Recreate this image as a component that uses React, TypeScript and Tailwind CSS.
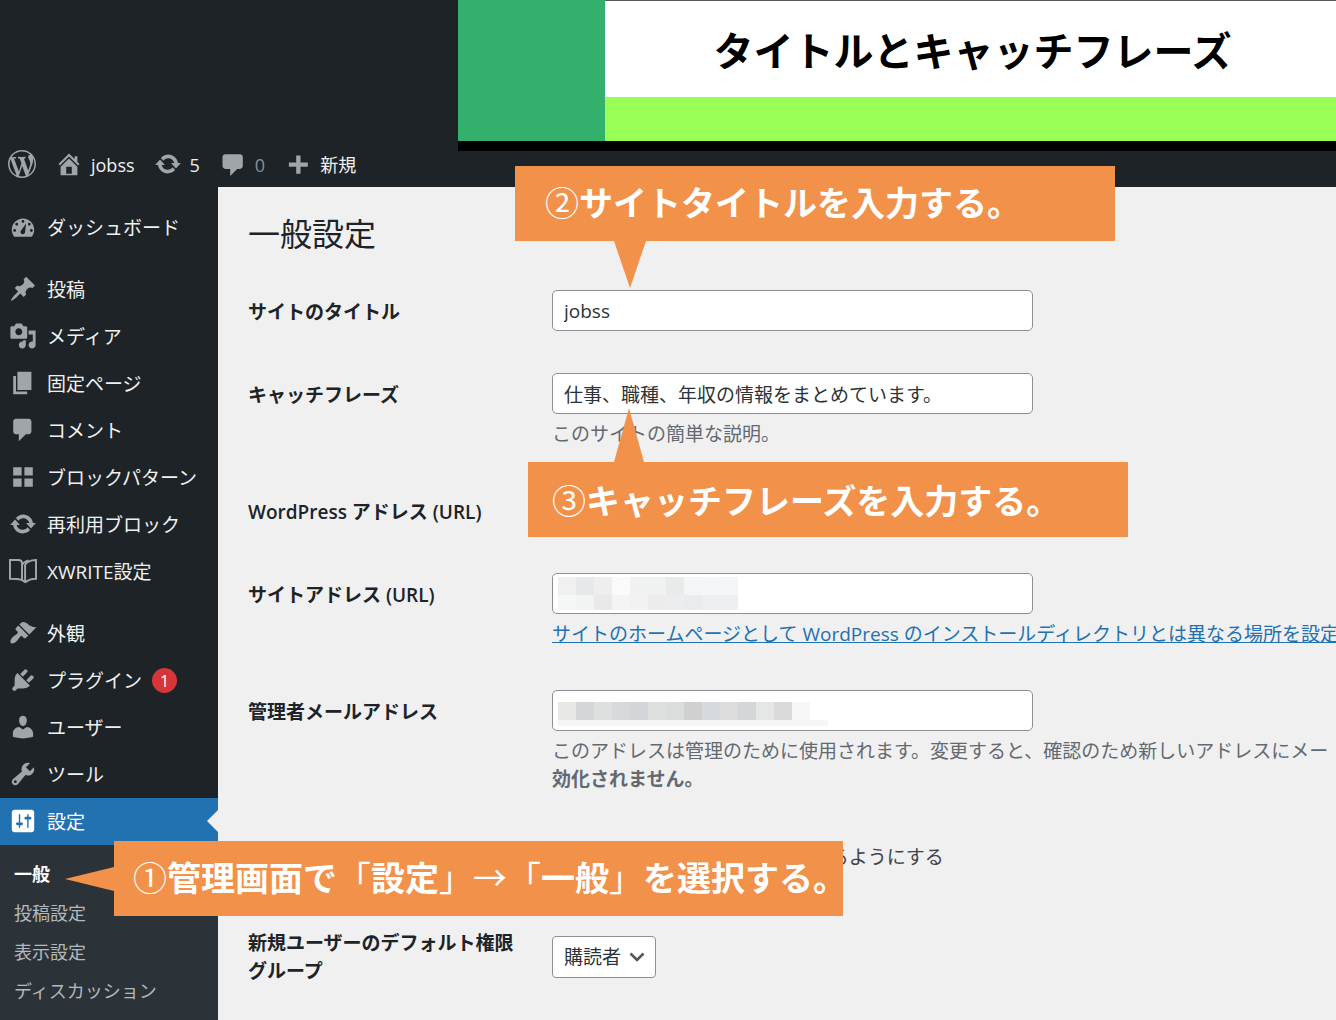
import type { ReactNode } from "react";

const ICONS = {
  wordpress:
    "M20 10c0-5.51-4.49-10-10-10C4.48 0 0 4.49 0 10c0 5.52 4.48 10 10 10 5.51 0 10-4.48 10-10zM7.78 15.37L4.37 6.22c.55-.02 1.17-.08 1.17-.08.5-.06.44-1.13-.06-1.11 0 0-1.45.11-2.37.11-.18 0-.37 0-.58-.01C4.12 2.69 6.87 1.11 10 1.11c2.33 0 4.45.87 6.05 2.34-.68-.11-1.65.39-1.65 1.58 0 .74.45 1.36.9 2.1.35.61.55 1.36.55 2.46 0 1.49-1.4 5-1.4 5l-3.03-8.37c.54-.02.82-.17.82-.17.5-.05.44-1.25-.06-1.22 0 0-1.44.12-2.38.12-.87 0-2.33-.12-2.33-.12-.5-.03-.56 1.2-.06 1.22l.92.08 1.26 3.41zM17.41 10c.24-.64.74-1.87.43-4.25.7 1.29 1.05 2.71 1.05 4.25 0 3.29-1.73 6.24-4.4 7.78.97-2.59 1.94-5.2 2.92-7.78zM6.1 18.09C3.12 16.65 1.11 13.53 1.11 10c0-1.3.23-2.48.72-3.59C3.25 10.3 4.67 14.2 6.1 18.09zm4.03-6.63l2.58 6.98c-.86.29-1.76.45-2.71.45-.79 0-1.57-.11-2.29-.33.81-2.38 1.62-4.74 2.42-7.1z",
  home: "M16 8.5l1.53 1.53-1.06 1.06L10 4.6l-6.47 6.49-1.06-1.06L10 2.5l4 4v-2h2v4zm-6-2.46l6 5.99V18H4v-5.97zM12 17v-5H8v5h4z",
  update:
    "M10.2 3.28c3.53 0 6.43 2.61 6.92 6h2.08l-3.5 4-3.5-4h2.32c-.45-1.97-2.21-3.45-4.32-3.45-1.45 0-2.73.71-3.54 1.78L4.95 5.66C6.23 4.2 8.11 3.28 10.2 3.28zm-.4 13.44c-3.52 0-6.43-2.61-6.92-6H.8l3.5-4c1.17 1.33 2.33 2.67 3.5 4H5.48c.45 1.97 2.21 3.45 4.32 3.45 1.45 0 2.73-.71 3.54-1.78l1.71 1.95c-1.28 1.46-3.15 2.38-5.25 2.38z",
  comments: "M5 2h9c1.1 0 2 .9 2 2v7c0 1.1-.9 2-2 2h-2l-5 5v-5H5c-1.1 0-2-.9-2-2V4c0-1.1.9-2 2-2z",
  bubble: "M4.500 3h10.500c1.1 0 2 .9 2 2v6.500c0 1.1-.9 2-2 2H13l-5 5v-5H4.500c-1.1 0-2-.9-2-2V5c0-1.1.9-2 2-2z",
  plus: "M17 9v3h-5.200v5H8.700v-5H3.500V9h5.200V4h3.100v5z",
  dashboard:
    "M3.76 17.01h12.48C17.34 15.63 18 13.9 18 12c0-4.41-3.58-8-8-8s-8 3.59-8 8c0 1.9.66 3.63 1.76 5.01zM9 6c0-.55.45-1 1-1s1 .45 1 1c0 .56-.45 1-1 1s-1-.44-1-1zM4.500 8c0-.55.45-1 1-1s1 .45 1 1c0 .56-.45 1-1 1s-1-.44-1-1zm4.100 4.500l3.600-5-.7 6.100c-.1.900-.700 1.600-1.600 1.600-1 0-1.700-.8-1.700-1.600 0-.4.100-.8.400-1.100zM13.500 8c0-.55.45-1 1-1s1 .45 1 1c0 .56-.45 1-1 1s-1-.44-1-1zM3 12.500c0-.55.45-1 1-1s1 .45 1 1c0 .56-.45 1-1 1s-1-.44-1-1zm12 0c0-.55.45-1 1-1s1 .45 1 1c0 .56-.45 1-1 1s-1-.44-1-1z",
  post: "M10.44 3.02l1.82-1.82 6.36 6.35-1.83 1.82c-1.05-.68-2.48-.57-3.41.36l-.75.75c-.92.93-1.04 2.35-.35 3.41l-1.83 1.82-2.41-2.41-2.8 2.79c-.42.42-3.38 2.71-3.8 2.29s1.86-3.39 2.28-3.81l2.79-2.79L4.1 9.36l1.83-1.82c1.05.69 2.48.57 3.4-.36l.75-.75c.93-.92 1.05-2.35.36-3.41z",
  media:
    "M13 11V4c0-.55-.45-1-1-1h-1.67L9 1H5L3.67 3H2c-.55 0-1 .45-1 1v7c0 .55.45 1 1 1h10c.55 0 1-.45 1-1zM7 4.5c1.38 0 2.5 1.12 2.5 2.5S8.38 9.5 7 9.5 4.5 8.38 4.5 7 5.62 4.5 7 4.5zM14 6h5v10.5c0 1.38-1.12 2.5-2.5 2.5S14 17.88 14 16.5s1.12-2.5 2.5-2.5c.17 0 .34.02.5.05V9h-3V6zm-4 8.05V13h2v3.5c0 1.38-1.12 2.5-2.5 2.5S7 17.88 7 16.5 8.12 14 9.5 14c.17 0 .34.02.5.05z",
  page: "M6 15V2h10v13H6zm-1 1h8v2H3V5h2v11z",
  grid: "M9 9V3H3v6h6zm8 0V3h-6v6h6zm-8 8v-6H3v6h6zm8 0v-6h-6v6h6z",
  book: "M11.500 18.200C10 16.200 8 15.600 .7 15.600V2.200H6.500C8 2.200 9.300 3 9.300 4.600V16.600M11.500 18.200V5.600C12 4 15 2.200 19.300 2.200V15.600C16 15.600 13.500 16.500 11.500 18.200M9.300 6C9.800 4.500 12 2.800 14 2.400",
  appearance:
    "M14.48 11.06L7.41 3.99l1.5-1.5c.5-.56 2.3-.47 3.51.32 1.21.8 1.43 1.28 2.91 2.1 1.18.64 2.45 1.26 4.45.85zm-.71.71L6.7 4.7 4.93 6.47c-.39.39-.39 1.02 0 1.41l1.06 1.06c.39.39.39 1.03 0 1.42-.6.6-1.43 1.11-2.21 1.69-.35.26-.7.53-1.01.84C1.43 14.23.4 16.08 1.4 17.07c.99 1 2.84-.03 4.18-1.36.31-.31.58-.66.85-1.02.57-.78 1.08-1.61 1.69-2.21.39-.39 1.02-.39 1.41 0l1.06 1.06c.39.39 1.02.39 1.41 0z",
  plugins:
    "M13.11 4.36L9.87 7.6 8 5.73l3.24-3.24c.35-.34 1.05-.2 1.56.32.52.51.66 1.21.31 1.55zm-8 1.77l.91-1.12 9.01 9.01-1.19.84c-.71.71-2.63 1.16-3.82 1.16H6.14L4.9 17.26c-.59.59-1.54.59-2.12 0-.59-.58-.59-1.53 0-2.12l1.24-1.24v-3.88c0-1.13.4-3.19 1.09-3.89zm7.26 3.97l3.24-3.24c.34-.35 1.04-.21 1.55.31.52.51.66 1.21.31 1.55l-3.24 3.25z",
  users:
    "M10 9.25c-2.27 0-2.73-3.44-2.73-3.44C7 4.02 7.82 2 9.97 2c2.16 0 2.98 2.02 2.71 3.81 0 0-.41 3.44-2.68 3.44zm0 2.57L12.72 10c2.39 0 4.52 2.33 4.52 4.53v2.49s-3.65 1.13-7.24 1.13c-3.65 0-7.24-1.13-7.24-1.13v-2.49c0-2.25 1.94-4.48 4.47-4.48z",
  tools:
    "M16.68 9.77c-1.34 1.34-3.3 1.67-4.95.99l-5.41 6.52c-.99.99-2.59.99-3.58 0s-.99-2.59 0-3.57l6.52-5.42c-.68-1.65-.35-3.61.99-4.95 1.28-1.28 3.12-1.62 4.72-1.06l-2.89 2.89 2.82 2.82 2.86-2.87c.53 1.58.18 3.39-1.08 4.65zM3.81 16.21c.4.39 1.04.39 1.43 0 .4-.4.4-1.04 0-1.43-.39-.4-1.03-.4-1.43 0-.39.39-.39 1.03 0 1.43z",
  settings:
    "M18 16V4c0-1.1-.9-2-2-2H4c-1.1 0-2 .9-2 2v12c0 1.1.9 2 2 2h12c1.1 0 2-.9 2-2zM8 11h1c.55 0 1 .45 1 1s-.45 1-1 1H8v1.5c0 .28-.22.5-.5.5s-.5-.22-.5-.5V13H6c-.55 0-1-.45-1-1s.45-1 1-1h1V5.5c0-.28.22-.5.5-.5s.5.22.5.5V11zm5-2h-1c-.55 0-1-.45-1-1s.45-1 1-1h1V5.5c0-.28.22-.5.5-.5s.5.22.5.5V7h1c.55 0 1 .45 1 1s-.45 1-1 1h-1v5.5c0 .28-.22.5-.5.5s-.5-.22-.5-.5V9z",
};

type IconName = keyof typeof ICONS;

function Icon({ name, className = "text-[#a0a5aa]" }: { name: IconName; className?: string }) {
  const outline = name === "book";
  return (
    <svg viewBox="0 0 20 20" aria-hidden="true" className={"mb-0.5 size-7 shrink-0 overflow-visible " + className}>
      <path
        d={ICONS[name]}
        fill={outline ? "none" : "currentColor"}
        stroke={outline ? "currentColor" : "none"}
        strokeWidth="1.400"
        fillRule="evenodd"
      />
    </svg>
  );
}

const MENU: { icon: IconName; label: string; badge?: number }[][] = [
  [{ icon: "dashboard", label: "ダッシュボード" }],
  [
    { icon: "post", label: "投稿" },
    { icon: "media", label: "メディア" },
    { icon: "page", label: "固定ページ" },
    { icon: "comments", label: "コメント" },
    { icon: "grid", label: "ブロックパターン" },
    { icon: "update", label: "再利用ブロック" },
    { icon: "book", label: "XWRITE設定" },
  ],
  [
    { icon: "appearance", label: "外観" },
    { icon: "plugins", label: "プラグイン", badge: 1 },
    { icon: "users", label: "ユーザー" },
    { icon: "tools", label: "ツール" },
  ],
];

function Banner() {
  return (
    <div className="absolute top-0 right-0 left-[458px] flex border-b-10 border-black">
      <div className="w-[147px] bg-[#33b16c]" />
      <div className="flex-1">
        <div className="border-t border-[#5a5a5a] bg-white pt-5 pb-4 pl-1 text-center text-[40px] leading-[60px] font-bold whitespace-nowrap text-black">
          タイトルとキャッチフレーズ
        </div>
        <div className="h-11 bg-[#99ff55]" />
      </div>
    </div>
  );
}

function BarItem({ icon, children, dim }: { icon: IconName; children: ReactNode; dim?: boolean }) {
  return (
    <a href="#" className={"flex items-center gap-2 " + (dim ? "text-[#8a8f94]" : "text-[#f0f0f1]")}>
      <Icon name={icon} />
      <span>{children}</span>
    </a>
  );
}

function Sidebar() {
  return (
    <nav className="flex w-[218px] shrink-0 flex-col bg-[#1d2327] pt-[17px] text-[19px] text-[#f0f0f1]">
      {MENU.map((group, i) => (
        <ul key={i} className="mb-[15px] last-of-type:mb-0">
          {group.map((item) => (
            <li key={item.label}>
              <a href="#" className="flex h-[47px] items-center pl-[9px] whitespace-nowrap">
                <Icon name={item.icon} />
                <span className="pt-0.5 pl-2.5">{item.label}</span>
                {item.badge && (
                  <span className="ml-2.5 flex size-[25px] items-center justify-center rounded-full bg-[#d63638] text-base text-white">
                    {item.badge}
                  </span>
                )}
              </a>
            </li>
          ))}
        </ul>
      ))}
      <a href="#" className="relative flex h-[47px] shrink-0 items-center bg-[#2271b1] pl-[9px] text-white">
        <Icon name="settings" className="text-white" />
        <span className="pt-0.5 pl-2.5">設定</span>
        <span className="absolute top-3 right-0 border-y-[11px] border-r-[11px] border-y-transparent border-r-[#f0f0f1]" />
      </a>
      <div className="flex-1 bg-[#2c3338] py-2.5 pl-3.5 text-lg leading-[39px] text-[#b4b9be]">
        <a href="#" className="block font-bold text-white">一般</a>
        <a href="#" className="block">投稿設定</a>
        <a href="#" className="block">表示設定</a>
        <a href="#" className="block">ディスカッション</a>
      </div>
    </nav>
  );
}

function Row({ id, label, children }: { id: string; label: string; children: ReactNode }) {
  return (
    <div className="flex py-[21px]">
      <label htmlFor={id} className="w-[304px] shrink-0 pt-2 pr-8 leading-7 font-semibold">
        {label}
      </label>
      <div className="min-w-0 flex-1 whitespace-nowrap">{children}</div>
    </div>
  );
}

function TextField({ id, value, children }: { id: string; value?: string; children?: ReactNode }) {
  return (
    <div className="relative w-[481px]">
      <input
        id={id}
        type="text"
        defaultValue={value}
        className="block h-[41px] w-full rounded-[5px] border border-[#8c8f94] bg-white px-[11px] text-[#2c3338]"
      />
      {children}
    </div>
  );
}

const SITE_TOP = ["bg-[#f0f0f1]", "bg-[#e7e8ea]", "bg-[#eeeeef]", "bg-[#fafafa]", "bg-[#f0f1f1]", "bg-[#f0f1f1]", "bg-[#e9eaea]", "bg-[#f4f5f7]", "bg-[#f5f6f8]", "bg-[#f4f5f7]"];
const SITE_BOTTOM = ["bg-[#f5f7f7]", "bg-[#f2f3f3]", "bg-[#e9e9e9]", "bg-[#f3f5f5]", "bg-[#f2f2f2]", "bg-[#ececed]", "bg-[#ebedee]", "bg-[#e9ebed]", "bg-[#eeeff1]", "bg-[#eeeff1]"];
const MAIL = ["bg-[#e8e8e5]", "bg-[#d4d6d9]", "bg-[#dee0df]", "bg-[#d8d9da]", "bg-[#d4d5d8]", "bg-[#dee0df]", "bg-[#dbdddd]", "bg-[#d0d0d0]", "bg-[#d5dade]", "bg-[#dcdcdc]", "bg-[#d4d6d8]", "bg-[#e5e6e6]", "bg-[#dadada]", "bg-[#f7f7f7]"];

function Blocks({ colors, height }: { colors: string[]; height: string }) {
  return (
    <div className="flex">
      {colors.map((c, i) => (
        <div key={i} className={"w-[18px] " + height + " " + c} />
      ))}
    </div>
  );
}

function Tail({ w, h, points, place }: { w: number; h: number; points: string; place: string }) {
  return (
    <svg width={w} height={h} aria-hidden="true" className={"absolute " + place}>
      <polygon points={points} fill="#f2914a" />
    </svg>
  );
}

function Callout({ place, children }: { place: string; children: ReactNode }) {
  return (
    <div className={"absolute z-10 h-[75px] bg-[#f2914a] text-[34px] leading-[75px] font-bold whitespace-nowrap text-white " + place}>
      {children}
    </div>
  );
}

export default function App() {
  return (
    <div className="relative flex min-h-screen flex-col overflow-hidden bg-[#1d2327] font-['Open_Sans','Noto_Sans_CJK_JP',sans-serif] text-[19px]">
      <header className="pt-[143px]">
        <div className="flex h-11 items-center gap-[19px] pl-2 text-lg">
          <a href="#" aria-label="WordPress">
            <Icon name="wordpress" />
          </a>
          <BarItem icon="home">jobss</BarItem>
          <BarItem icon="update">5</BarItem>
          <BarItem icon="bubble" dim>0</BarItem>
          <BarItem icon="plus">新規</BarItem>
        </div>
        <Banner />
      </header>

      <div className="flex flex-1">
        <Sidebar />
        <main className="min-w-0 flex-1 overflow-hidden bg-[#f0f0f1] pt-[23px] pl-[30px] text-[#1d2327]">
          <h1 className="pb-3 text-[32px] leading-[47px]">一般設定</h1>
          <form>
            <Row id="title" label="サイトのタイトル">
              <TextField id="title" value="jobss" />
            </Row>
            <Row id="tagline" label="キャッチフレーズ">
              <TextField id="tagline" value="仕事、職種、年収の情報をまとめています。" />
              <p className="pt-1.5 leading-7 text-[#646970]">このサイトの簡単な説明。</p>
            </Row>
            <Row id="wpurl" label="WordPress アドレス (URL)">
              <TextField id="wpurl" />
            </Row>
            <Row id="siteurl" label="サイトアドレス (URL)">
              <TextField id="siteurl">
                <div className="absolute top-1 left-1.5">
                  <Blocks colors={SITE_TOP} height="h-[18px]" />
                  <Blocks colors={SITE_BOTTOM} height="h-[15px]" />
                </div>
              </TextField>
              <p className="pt-1.5 leading-7">
                <a href="#" className="text-[#2271b1] underline">
                  サイトのホームページとして WordPress のインストールディレクトリとは異なる場所を設定
                </a>
              </p>
            </Row>
            <Row id="email" label="管理者メールアドレス">
              <TextField id="email">
                <div className="absolute top-3 left-1.5">
                  <Blocks colors={MAIL} height="h-[18px]" />
                  <div className="h-1.5 w-[270px] bg-[#f5f7f7]" />
                </div>
              </TextField>
              <p className="pt-1.5 leading-7 text-[#646970]">
                このアドレスは管理のために使用されます。変更すると、確認のため新しいアドレスにメー
                <br />
                <strong>効化されません。</strong>
              </p>
            </Row>
            <div className="flex pt-[21px] pb-11">
              <span className="w-[304px] shrink-0 pt-2 leading-7 font-semibold">メンバーシップ</span>
              <label className="flex items-center gap-3 pt-2 leading-7 whitespace-nowrap text-[#3c434a]">
                <input type="checkbox" className="size-5" />
                だれでもユーザー登録ができるようにする
              </label>
            </div>
            <div className="flex py-3.5">
              <label htmlFor="role" className="w-[304px] shrink-0 pr-8 leading-7 font-semibold whitespace-nowrap">
                新規ユーザーのデフォルト権限
                <br />
                グループ
              </label>
              <div className="relative self-center">
                <select
                  id="role"
                  className="block h-[42px] w-[104px] appearance-none rounded-[4px] border border-[#8c8f94] bg-white pl-[11px] text-[#2c3338]"
                >
                  <option>購読者</option>
                </select>
                <svg viewBox="0 0 16 10" aria-hidden="true" className="pointer-events-none absolute top-4 right-[11px] h-2.5 w-4">
                  <path d="M1.500 1.500L8 8l6.500-6.500" fill="none" stroke="#50575e" strokeWidth="2.600" />
                </svg>
              </div>
            </div>
          </form>
        </main>
      </div>

      <Callout place="left-[515px] top-[166px] w-[600px] pl-[30px]">
        <span className="font-normal">②</span>サイトタイトルを入力する。
        <Tail w={32} h={47} points="0,0 32,0 16,47" place="left-[99px] top-full" />
      </Callout>
      <Callout place="left-[528px] top-[462px] w-[600px] pl-6 pt-0.5">
        <span className="font-normal">③</span>キャッチフレーズを入力する。
        <Tail w={30} h={54} points="0,54 30,54 15,0" place="left-[86px] bottom-full" />
      </Callout>
      <Callout place="left-[114px] top-[841px] w-[729px] pl-[19px]">
        <span className="font-normal">①</span>管理画面で<span className="font-normal">「</span>設定
        <span className="font-normal">」→「</span>一般<span className="font-normal">」</span>を選択する。
        <Tail w={49} h={24} points="49,0 49,24 0,12" place="right-full top-[26px]" />
      </Callout>
    </div>
  );
}
